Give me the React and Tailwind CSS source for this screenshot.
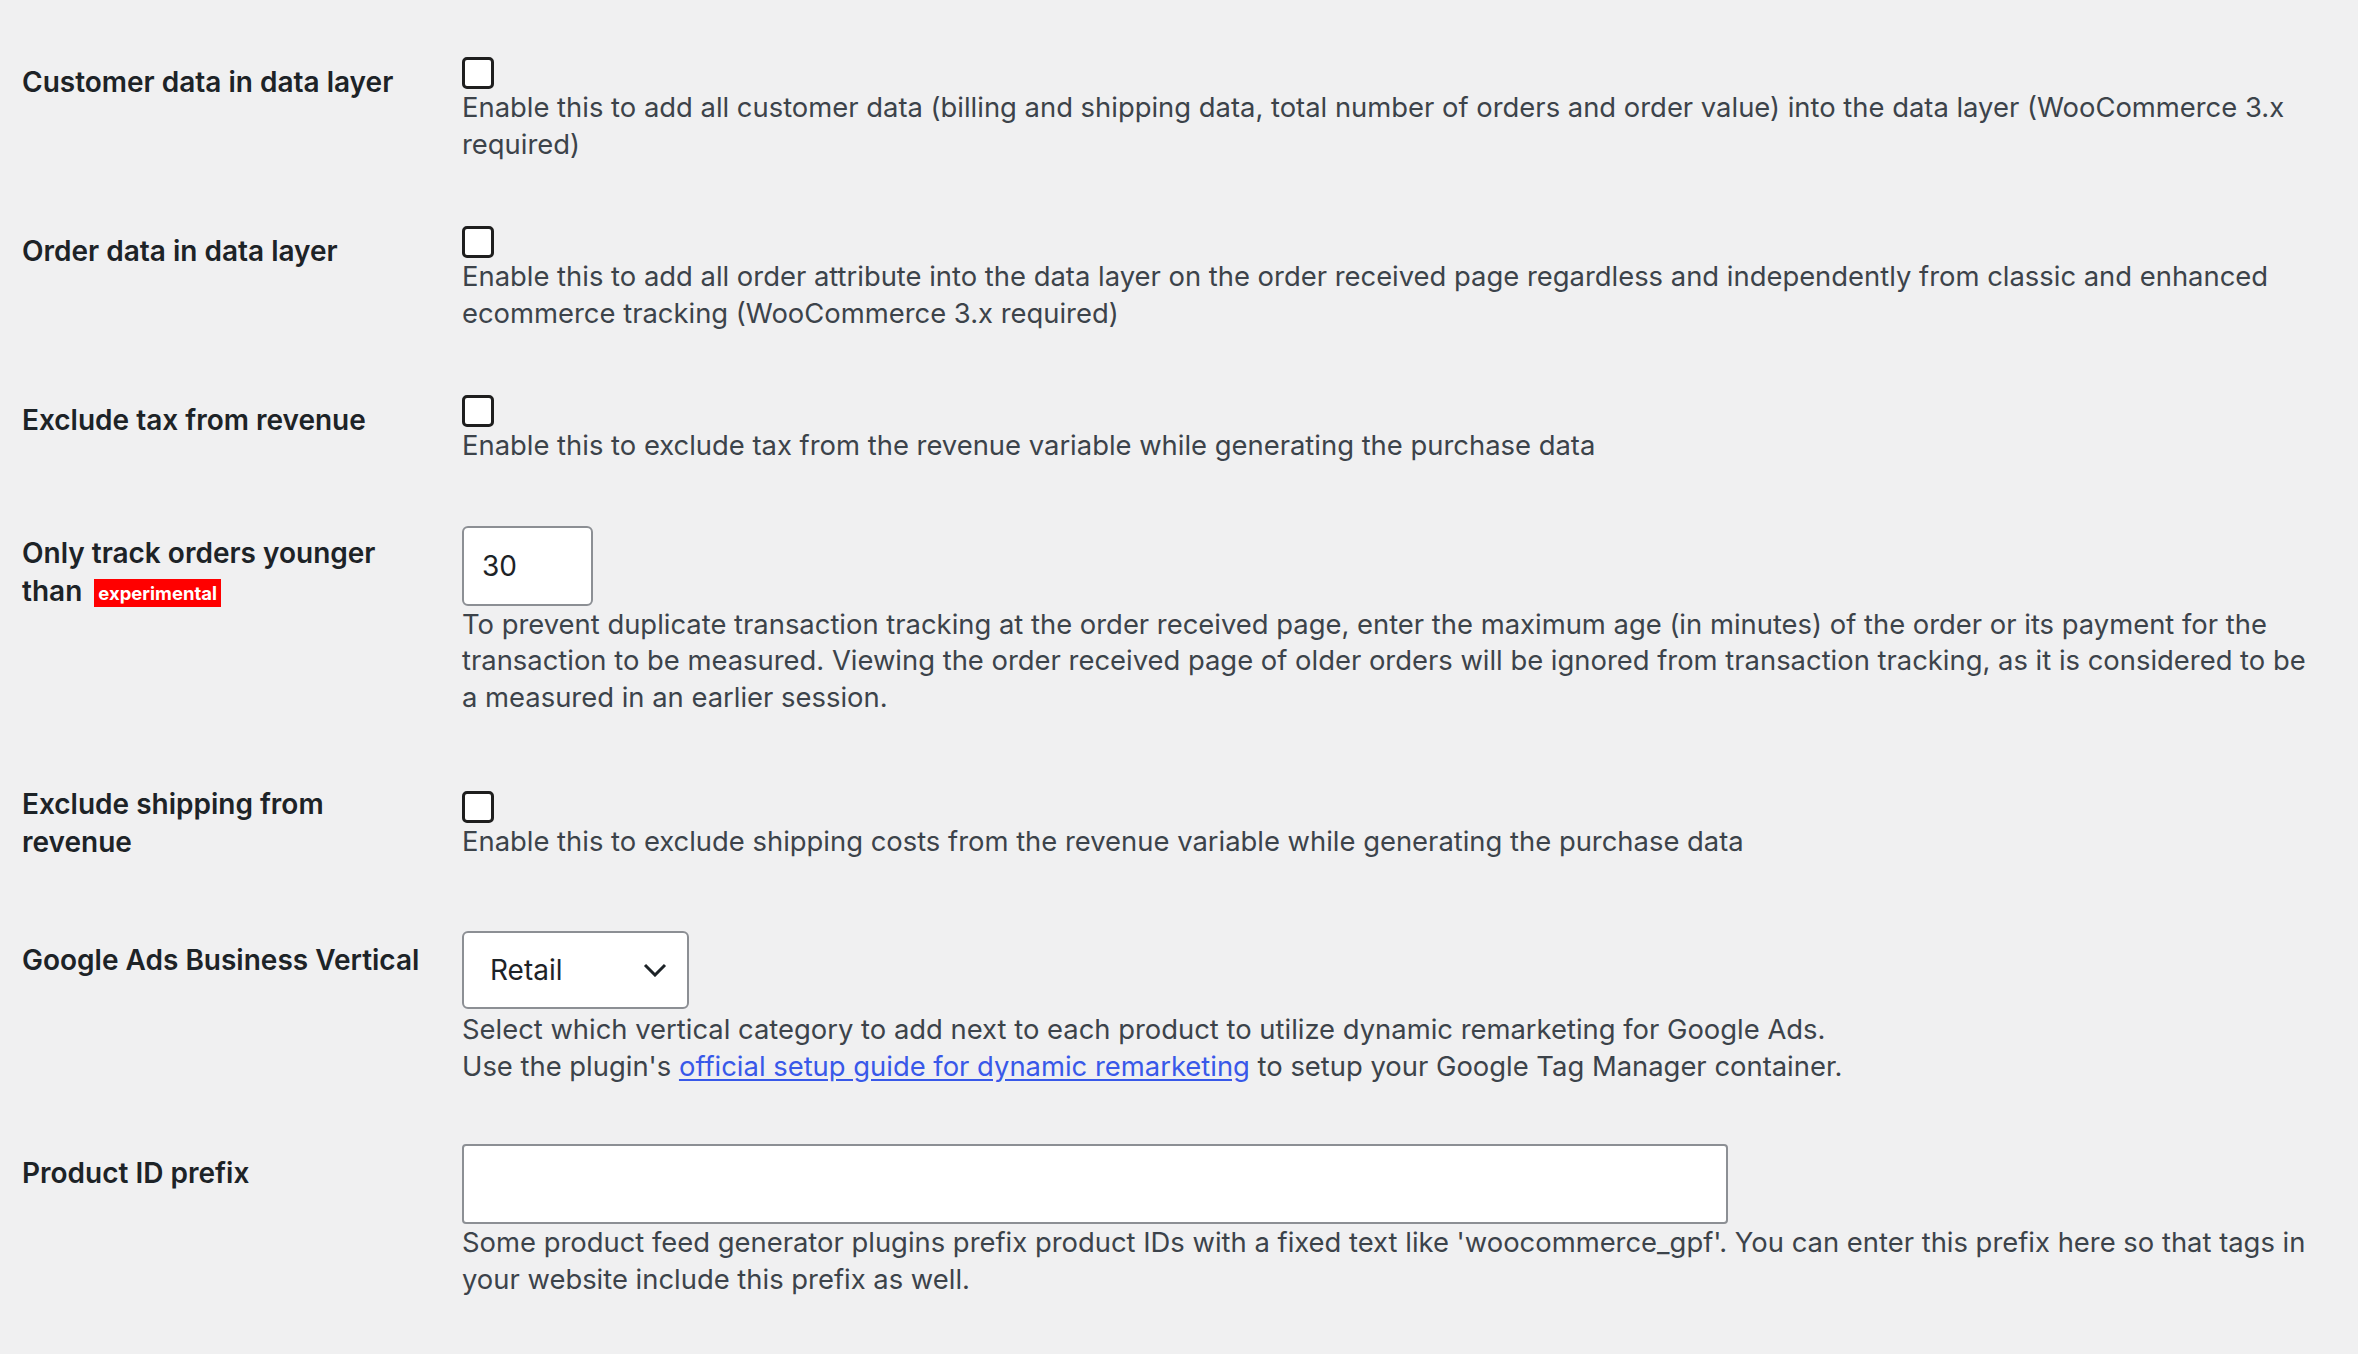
import React from "react";

function Checkbox() {
  return (
    <div className="pt-[4px] h-[36px]">
      <div className="w-[32px] h-[32px] rounded-[5px] border-[3px] border-[#1e1e1e] bg-white" />
    </div>
  );
}

function Desc({ children, className = "" }) {
  return (
    <p className={"text-[27.4px] leading-[36.5px] text-[#3c434a] " + className}>{children}</p>
  );
}

function Row({ label, children, center = false }) {
  return (
    <div className="flex">
      <div className="w-[420px] shrink-0 pr-[20px] pt-[40px] pb-[40px] self-start">
        <div className="text-[28px] leading-[38px] font-semibold text-[#1d2327]">{label}</div>
      </div>
      <div className={"flex-1 px-[20px] py-[30px] " + (center ? "self-center" : "self-start")}>
        {children}
      </div>
    </div>
  );
}

export default function App() {
  return (
    <div className="min-h-screen w-full bg-[#f0f0f1] pl-[22px] pr-[20px] pt-[23px] font-['Inter','Liberation_Sans',sans-serif] antialiased">
      <Row label="Customer data in data layer">
        <Checkbox />
        <Desc>
          Enable this to add all customer data (billing and shipping data, total number of orders and order value) into the data layer (WooCommerce 3.x required)
        </Desc>
      </Row>
      <Row label="Order data in data layer">
        <Checkbox />
        <Desc>
          Enable this to add all order attribute into the data layer on the order received page regardless and independently from classic and enhanced ecommerce tracking (WooCommerce 3.x required)
        </Desc>
      </Row>
      <Row label="Exclude tax from revenue">
        <Checkbox />
        <Desc>Enable this to exclude tax from the revenue variable while generating the purchase data</Desc>
      </Row>
      <Row
        label={
          <>
            <span>Only track orders younger than</span>
            <span className="inline-block ml-[12px] align-[1px] bg-[#ff0000] text-white text-[18.5px] leading-[28px] font-bold px-[4px]">experimental</span>
          </>
        }
      >
        <div className="mt-[2px] w-[131px] h-[80px] rounded-[6px] border-2 border-[#8c8f94] bg-white flex items-center pl-[18px] text-[28px] text-[#1d2327]">
          30
        </div>
        <Desc>
          To prevent duplicate transaction tracking at the order received page, enter the maximum age (in minutes) of the order or its payment for the transaction to be measured. Viewing the order received page of older orders will be ignored from transaction tracking, as it is considered to be a measured in an earlier session.
        </Desc>
      </Row>
      <Row label="Exclude shipping from revenue" center>
        <Checkbox />
        <Desc>Enable this to exclude shipping costs from the revenue variable while generating the purchase data</Desc>
      </Row>
      <Row label="Google Ads Business Vertical">
        <div className="w-[227px] h-[78px] rounded-[6px] border-2 border-[#8c8f94] bg-white flex items-center justify-between pl-[26px] pr-[20px] text-[28px] text-[#1d2327]">
          <span>Retail</span>
          <svg width="24" height="14" viewBox="0 0 24 14" fill="none">
            <polyline points="2,2 12,12 22,2" stroke="#1d2327" strokeWidth="3" />
          </svg>
        </div>
        <Desc className="mt-[2px]">
          Select which vertical category to add next to each product to utilize dynamic remarketing for Google Ads.
          <br />
          Use the plugin's{" "}
          <a href="#" className="text-[#3858e9] underline underline-offset-[3px]">official setup guide for dynamic remarketing</a>{" "}
          to setup your Google Tag Manager container.
        </Desc>
      </Row>
      <Row label="Product ID prefix">
        <div className="w-[1266px] h-[80px] rounded-[4px] border-2 border-[#8c8f94] bg-white" />
        <Desc>
          Some product feed generator plugins prefix product IDs with a fixed text like 'woocommerce_gpf'. You can enter this prefix here so that tags in your website include this prefix as well.
        </Desc>
      </Row>
    </div>
  );
}
